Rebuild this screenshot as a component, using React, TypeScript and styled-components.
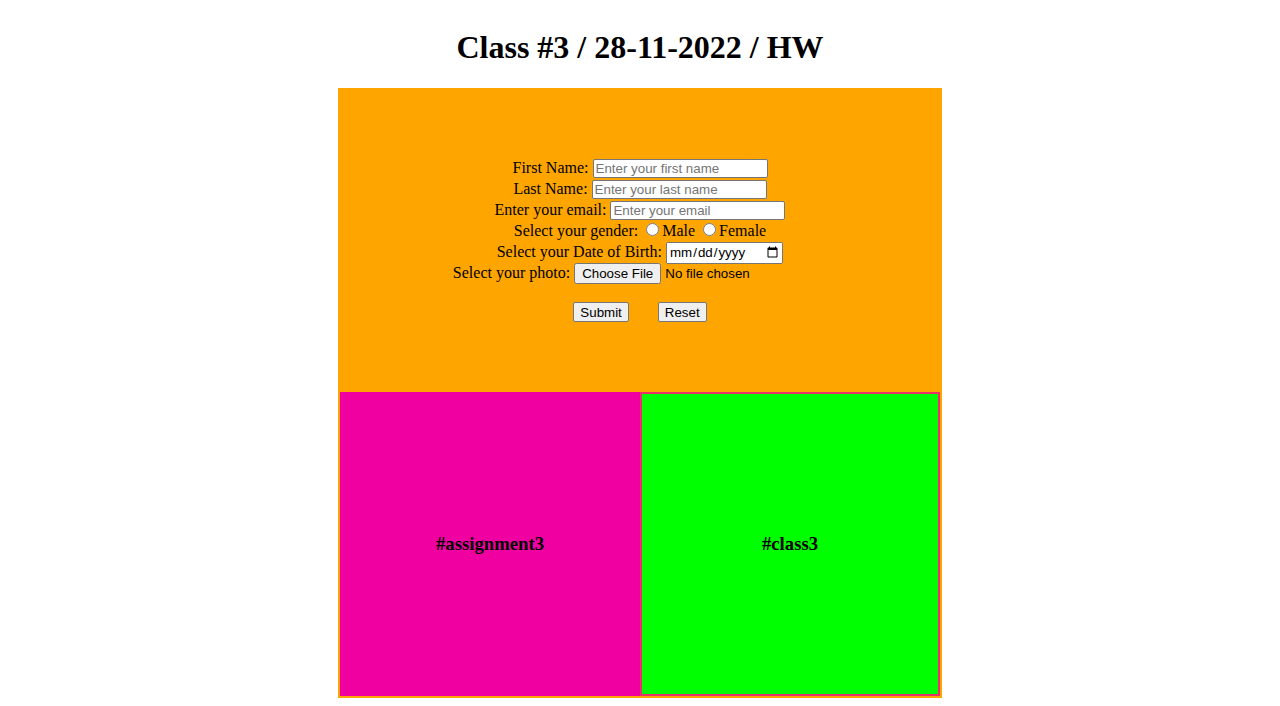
import { ReactElement } from "react";
import styled, { createGlobalStyle } from "styled-components";

const Global = createGlobalStyle`
  body {
    margin: 8px;
    font-family: "Liberation Serif", "Times New Roman", serif;
    font-size: 16px;
    color: #000;
    background: #fff;
  }
`;

const Title = styled.h1`
  font-size: 32px;
  font-weight: 700;
  text-align: center;
  margin: 21.44px 0;
  line-height: 37px;
`;

const Board = styled.div`
  width: 604px;
  margin: 0 auto;
  background-color: #ffa500;
  padding: 0 2px 2px;
  box-sizing: border-box;
`;

const FormArea = styled.form`
  height: 304px;
  display: flex;
  flex-direction: column;
  justify-content: center;
  align-items: center;
  text-align: center;
`;

const Line = styled.div`
  line-height: 21px;
  height: 21px;
  white-space: nowrap;
`;

const Field = styled.input`
  font-family: "Liberation Sans", Arial, sans-serif;
  font-size: 13.33px;
  vertical-align: baseline;
  &[type="text"],
  &[type="email"] {
    width: 169px;
    padding: 1px 2px;
    border: 1px solid #767676;
    border-radius: 2px;
    background: #fff;
  }
  &[type="radio"] {
    margin: 3px 3px 0 8px;
  }
`;

const Buttons = styled.div`
  display: flex;
  gap: 29px;
  margin-top: 19px;
`;

const Btn = styled.button`
  font-family: "Liberation Sans", Arial, sans-serif;
  font-size: 13.33px;
  padding: 1px 6px;
  border: 1px solid #767676;
  border-radius: 2px;
  background: #efefef;
  height: 20px;
`;

const Bottom = styled.div`
  display: flex;
  height: 304px;
  background-color: #f000a0;
`;

const Cell = styled.div<{ $bg: string; $framed?: boolean }>`
  flex: ${(p) => (p.$framed ? "1" : "0 0 300px")};
  display: flex;
  align-items: center;
  justify-content: center;
  background-color: ${(p) => p.$bg};
  border: ${(p) => (p.$framed ? "2px solid #e8306e" : "none")};
  h3 {
    margin: 0;
    font-size: 18.72px;
    font-weight: 700;
  }
`;

export default function App(): ReactElement {
  return (
    <>
      <Global />
      <Title>Class #3 / 28-11-2022 / HW</Title>
      <Board>
        <FormArea onSubmit={(e) => e.preventDefault()}>
          <Line>
            First Name: <Field type="text" placeholder="Enter your first name" />
          </Line>
          <Line>
            Last Name: <Field type="text" placeholder="Enter your last name" />
          </Line>
          <Line>
            Enter your email: <Field type="email" placeholder="Enter your email" />
          </Line>
          <Line>
            Select your gender:
            <Field type="radio" name="gender" />Male
            <Field type="radio" name="gender" />Female
          </Line>
          <Line>
            Select your Date of Birth: <Field type="date" />
          </Line>
          <Line>
            Select your photo: <Field type="file" />
          </Line>
          <Buttons>
            <Btn type="submit">Submit</Btn>
            <Btn type="reset">Reset</Btn>
          </Buttons>
        </FormArea>
        <Bottom>
          <Cell $bg="#f000a0">
            <h3>#assignment3</h3>
          </Cell>
          <Cell $bg="#00ff00" $framed>
            <h3>#class3</h3>
          </Cell>
        </Bottom>
      </Board>
    </>
  );
}
